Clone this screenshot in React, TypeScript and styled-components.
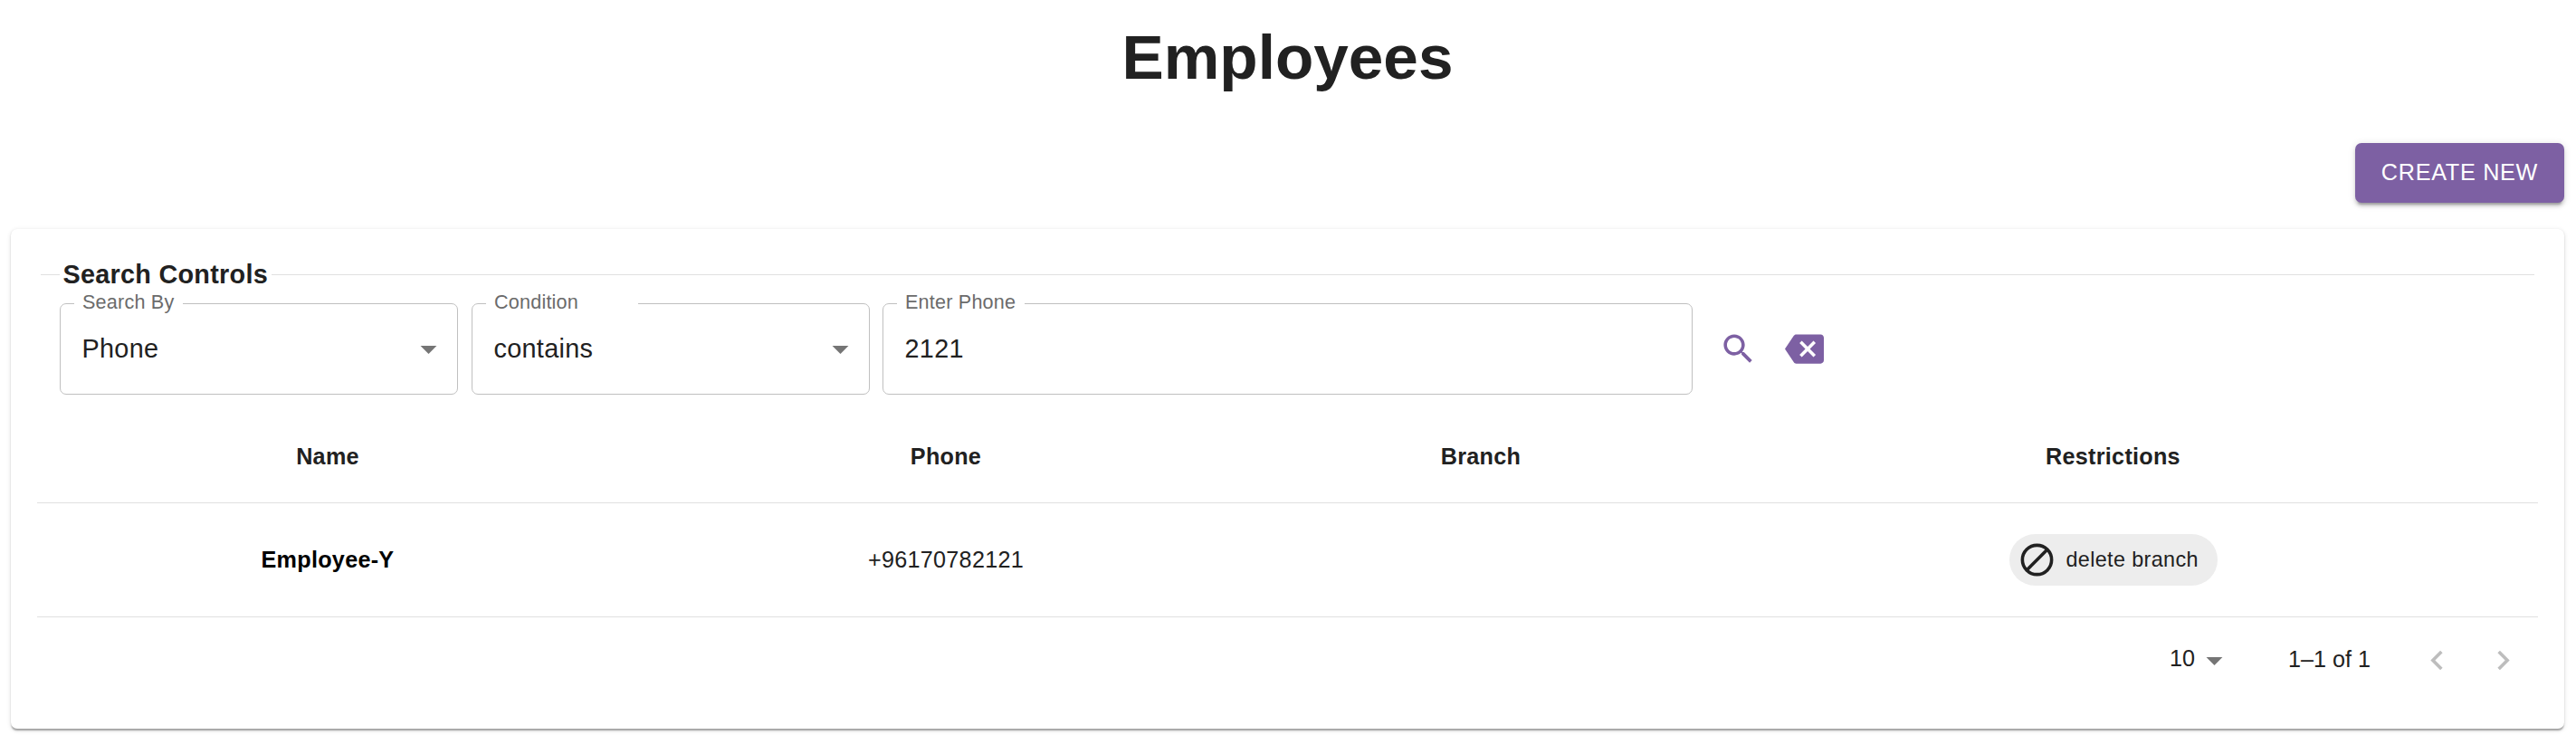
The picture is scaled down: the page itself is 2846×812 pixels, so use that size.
import React from 'react';
import styled, { createGlobalStyle } from 'styled-components';

const GlobalStyle = createGlobalStyle`
  * { box-sizing: border-box; }
  body { margin: 0; background: #fff; color: #212121; font-family: "Liberation Sans", Arial, sans-serif; }
`;

const Page = styled.main`
  height: 812px;
  padding: 0 13px 0 12px;
  display: flex;
  flex-direction: column;
`;
const Title = styled.h1`
  margin: 0;
  height: 125px;
  padding-top: 23px;
  line-height: 80px;
  font-size: 69.3px;
  text-align: center;
`;
const Actions = styled.div`
  display: flex;
  justify-content: flex-end;
  padding-top: 33px;
  height: 128px;
`;
const CreateButton = styled.button`
  width: 231px;
  height: 66px;
  padding: 0 0 2px;
  border: 0;
  border-radius: 7px;
  background: #7d60a3;
  color: #fff;
  font: 25.2px "Liberation Sans", Arial, sans-serif;
  letter-spacing: 0.72px;
  box-shadow: 0 5.4px 1.8px -3.6px rgba(0,0,0,.2), 0 3.6px 3.6px rgba(0,0,0,.14), 0 1.8px 9px rgba(0,0,0,.12);
`;
const Card = styled.section`
  height: 552px;
  padding: 38px 29px 0;
  border-radius: 7px;
  background: #fff;
  box-shadow: 0 3.6px 1.8px -1.8px rgba(0,0,0,.2), 0 1.8px 1.8px rgba(0,0,0,.14), 0 1.8px 5.4px rgba(0,0,0,.12);
`;
const SearchGroup = styled.fieldset`
  margin: 0 4px;
  padding: 0 0 0 21px;
  height: 159px;
  border: 0 solid #e0e0e0;
  border-top-width: 1px;
`;
const GroupLegend = styled.legend`
  padding: 0 4px 0 3.5px;
  height: 24px;
  line-height: 24px;
  font-size: 28.8px;
  font-weight: 700;
  letter-spacing: 0.27px;
`;
const Controls = styled.div`
  display: flex;
  padding-top: 10px;
`;
const Field = styled.fieldset<{ $width: number; $gap: number }>`
  width: ${(p) => p.$width}px;
  height: 111px;
  margin: 0 ${(p) => p.$gap}px 0 0;
  padding: 0 10.5px 0 15px;
  border: 1px solid #c0c0c0;
  border-radius: 7px;
  min-width: 0;
`;
const FieldLegend = styled.legend<{ $width: number }>`
  width: ${(p) => p.$width}px;
  height: 20px;
  padding: 0 0 0 9px;
  line-height: 17px;
  font-size: 21.6px;
  letter-spacing: 0.2px;
  color: #6b6b6b;
  white-space: nowrap;
`;
const FieldValue = styled.div`
  display: flex;
  align-items: center;
  justify-content: space-between;
  height: 80px;
  padding-left: 8.5px;
  font-size: 28.8px;
  letter-spacing: 0.3px;
`;
const IconButton = styled.button<{ $width: number }>`
  display: flex;
  align-items: center;
  justify-content: center;
  width: ${(p) => p.$width}px;
  height: 73px;
  margin-top: 24px;
  padding: 0;
  border: 0;
  background: none;
  color: #7d60a3;
`;
const Table = styled.div`
  display: grid;
  grid-template-columns: 642px 724px 458px 1fr;
`;
const Cell = styled.div<{ $head?: boolean; $strong?: boolean }>`
  display: flex;
  align-items: center;
  justify-content: center;
  height: ${(p) => (p.$head ? 106 : 126)}px;
  padding-top: ${(p) => (p.$head ? 4 : 0)}px;
  border-bottom: 1px solid #e0e0e0;
  font-size: 25.2px;
  font-weight: ${(p) => (p.$head || p.$strong ? 700 : 400)};
  color: ${(p) => (p.$strong ? '#000' : '#212121')};
  letter-spacing: 0.27px;
`;
const Chip = styled.span`
  display: flex;
  align-items: center;
  gap: 11px;
  width: 230px;
  height: 57px;
  padding-left: 9px;
  border-radius: 29px;
  background: #ededed;
  font-size: 23.4px;
  letter-spacing: 0.35px;
`;
const Footer = styled.footer`
  display: flex;
  justify-content: flex-end;
  align-items: center;
  height: 94px;
  padding-right: 2px;
  font-size: 25.2px;
`;
const PageSize = styled.div`
  display: flex;
  align-items: center;
  margin-right: 60px;
`;
const PageSizeValue = styled.span`
  padding-bottom: 3px;
`;
const Range = styled.span`
  margin-right: 37px;
  padding-bottom: 1px;
`;
const PageButton = styled.button`
  display: flex;
  align-items: center;
  justify-content: center;
  width: 73px;
  height: 73px;
  padding: 0;
  border: 0;
  background: none;
  color: #bdbdbd;
`;

const icons = {
  arrow: 'M7 10l5 5 5-5z',
  search: 'M15.5 14h-.79l-.28-.27C15.41 12.59 16 11.11 16 9.5 16 5.91 13.09 3 9.5 3S3 5.91 3 9.5 5.91 16 9.5 16c1.61 0 3.09-.59 4.23-1.57l.27.28v.79l5 4.99L20.49 19l-4.99-5zm-6 0C7.01 14 5 11.99 5 9.5S7.01 5 9.5 5 14 7.01 14 9.5 11.99 14 9.5 14z',
  clear: 'M22 3H7c-.69 0-1.23.35-1.59.88L0 12l5.41 8.11c.36.53.9.89 1.59.89h15c1.1 0 2-.9 2-2V5c0-1.1-.9-2-2-2zm-3 12.59L17.59 17 14 13.41 10.41 17 9 15.59 12.59 12 9 8.41 10.41 7 14 10.59 17.59 7 19 8.41 15.41 12 19 15.59z',
  left: 'M15.41 7.41L14 6l-6 6 6 6 1.41-1.41L10.83 12z',
  right: 'M10 6L8.59 7.41 13.17 12l-4.58 4.59L10 18l6-6z',
};

function Icon({ name, size = 43, color = 'currentColor' }: { name: keyof typeof icons; size?: number; color?: string }) {
  return <svg width={size} height={size} viewBox="0 0 24 24" fill={color}><path d={icons[name]} /></svg>;
}

function BlockIcon() {
  return (
    <svg width="43" height="43" viewBox="0 0 24 24" fill="none" stroke="#212121" strokeWidth="2">
      <circle cx="12" cy="12" r="9" />
      <path d="M5.6 18.4L18.4 5.6" />
    </svg>
  );
}

type FieldProps = { label: string; value: string; width: number; gap: number; notch: number; select?: boolean };
function SearchField({ label, value, width, gap, notch, select }: FieldProps) {
  return (
    <Field $width={width} $gap={gap}>
      <FieldLegend $width={notch}>{label}</FieldLegend>
      <FieldValue>
        <span>{value}</span>
        {select && <Icon name="arrow" color="#757575" />}
      </FieldValue>
    </Field>
  );
}

export default function App() {
  return (
    <Page>
      <GlobalStyle />
      <Title>Employees</Title>
      <Actions><CreateButton>CREATE NEW</CreateButton></Actions>
      <Card>
        <SearchGroup>
          <GroupLegend>Search Controls</GroupLegend>
          <Controls>
            <SearchField label="Search By" value="Phone" width={440} gap={15} notch={120} select />
            <SearchField label="Condition" value="contains" width={440} gap={14} notch={168} select />
            <SearchField label="Enter Phone" value="2121" width={895} gap={13.5} notch={141} />
            <IconButton $width={73} aria-label="Search"><Icon name="search" /></IconButton>
            <IconButton $width={73} aria-label="Clear"><Icon name="clear" /></IconButton>
          </Controls>
        </SearchGroup>
        <Table>
          <Cell $head>Name</Cell><Cell $head>Phone</Cell><Cell $head>Branch</Cell><Cell $head>Restrictions</Cell>
          <Cell $strong>Employee-Y</Cell><Cell>+96170782121</Cell><Cell />
          <Cell><Chip><BlockIcon />delete branch</Chip></Cell>
        </Table>
        <Footer>
          <PageSize><PageSizeValue>10</PageSizeValue><Icon name="arrow" color="#757575" /></PageSize>
          <Range>1–1 of 1</Range>
          <PageButton aria-label="Previous page"><Icon name="left" /></PageButton>
          <PageButton aria-label="Next page"><Icon name="right" /></PageButton>
        </Footer>
      </Card>
    </Page>
  );
}
